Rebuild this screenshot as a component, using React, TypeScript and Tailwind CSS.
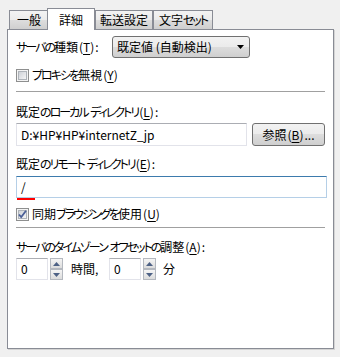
import React from "react";

const font = "[font-family:'Noto_Sans_CJK_JP','Noto_Sans',sans-serif] [font-feature-settings:'palt']";
const btnBg =
  "bg-[linear-gradient(#f2f2f2_0%,#ebebeb_50%,#dddddd_50%,#cfcfcf_100%)] border border-[#707070] rounded-[3px]";

// kana in the original UI font are narrow, tighten them
function J({ t }: { t: string }) {
  const parts = t.split(/([\u3040-\u30ff]+)/);
  return (
    <>
      {parts.map((p, i) =>
        /[\u3040-\u30ff]/.test(p) ? (
          <span key={i} className="tracking-[-2px]">
            {p}
          </span>
        ) : (
          <React.Fragment key={i}>{p}</React.Fragment>
        )
      )}
    </>
  );
}

function Key({ k }: { k: string }) {
  return (
    <>
      <span className="ml-[1px]">(</span>
      <span className="underline underline-offset-2">{k}</span>
      <span className="mr-[1px]">)</span>
    </>
  );
}

function CheckBox({ checked }: { checked?: boolean }) {
  return (
    <svg width="13" height="13" viewBox="0 0 13 13" className="shrink-0">
      <defs>
        <linearGradient id={checked ? "cbg1" : "cbg0"} x1="0" y1="0" x2="1" y2="1">
          <stop offset="0" stopColor="#cbcfd5" />
          <stop offset="1" stopColor="#f7f7f7" />
        </linearGradient>
      </defs>
      <rect x="0.5" y="0.5" width="12" height="12" fill="#f4f4f4" stroke="#8e8f8f" />
      <rect x="2.5" y="2.5" width="8" height="8" fill={`url(#${checked ? "cbg1" : "cbg0"})`} stroke="#aeb3b9" />
      {checked && (
        <path d="M3 6.5 L5.2 9 L10 2.8" fill="none" stroke="#4a5f97" strokeWidth="1.8" />
      )}
    </svg>
  );
}

function Tab({ label, selected, w, ml }: { label: string; selected?: boolean; w: string; ml?: string }) {
  if (selected) {
    return (
      <div
        className={`${w} ${ml ?? ""} relative z-10 -mb-px h-[22px] border border-b-0 border-[#898c95] bg-white flex items-center justify-center text-[12px]`}
      >
        <span>
          <J t={label} />
        </span>
      </div>
    );
  }
  return (
    <div
      className={`${w} ${ml ?? ""} h-[19px] border border-b-0 border-[#898c95] bg-[linear-gradient(#f3f3f3_0%,#ebebeb_50%,#dddddd_51%,#cfcfcf_100%)] flex items-center justify-center text-[12px]`}
    >
      <span>
        <J t={label} />
      </span>
    </div>
  );
}

function Spin() {
  const arrow = (up: boolean) => (
    <div className="h-[11px] border border-[#b4b8bf] bg-[linear-gradient(#f5f5f5,#dcdcdc)] flex items-center justify-center">
      <svg width="7" height="4" viewBox="0 0 7 4">
        <path d={up ? "M0 4 L3.5 0 L7 4 Z" : "M0 0 L3.5 4 L7 0 Z"} fill="#4d6185" />
      </svg>
    </div>
  );
  return (
    <div className="ml-[2px] w-[13px] flex flex-col">
      {arrow(true)}
      {arrow(false)}
    </div>
  );
}

function NumBox() {
  return (
    <div className="w-[32px] h-[22px] border border-[#e2e3ea] border-t-[#abadb3] bg-white flex items-center pl-[4px] text-[12px]">
      0
    </div>
  );
}

function Label({ t, k, mt }: { t: string; k: string; mt: string }) {
  return (
    <div className={`${mt} h-[16px] flex items-center text-[12px]`}>
      <span className="whitespace-pre">
        <J t={t} />
        <Key k={k} />:
      </span>
    </div>
  );
}

export default function App() {
  return (
    <div className={`w-[340px] h-[357px] bg-[#f0f0f0] pt-[8px] pl-[7px] text-black ${font}`}>
      <div className="flex items-end h-[21px] pl-[2px]">
        <Tab label="一般" w="w-[40px]" />
        <Tab label="詳細" selected w="w-[48px]" ml="-ml-[2px]" />
        <Tab label="転送設定" w="w-[58px]" />
        <Tab label="文字セット" w="w-[60px]" />
      </div>

      <div className="w-[327px] h-[320px] border border-[#898c95] bg-white pl-[8px] pt-[6px] shadow-[1px_1px_0_#d4d4d4]">
        <div className="flex items-center h-[22px] text-[12px]">
          <span className="w-[96px]">
            <J t="サーバの種類" />
            <Key k="T" />:
          </span>
          <div className={`${btnBg} w-[138px] h-[22px] flex items-center pl-[4px] pr-[5px]`}>
            <span className="flex-1">既定値 (自動検出)</span>
            <svg width="7" height="4" viewBox="0 0 7 4">
              <path d="M0 0 L7 0 L3.5 4 Z" fill="#000" />
            </svg>
          </div>
        </div>

        <div className="mt-[10px] flex items-center gap-[3px] h-[14px] text-[12px]">
          <CheckBox />
          <span>
            <J t="プロキシを無視" />
            <Key k="Y" />
          </span>
        </div>

        <div className="mt-[9px] w-[309px] border-t border-[#a0a0a0]" />

        <Label mt="mt-[12px]" t="既定のローカル ディレクトリ" k="L" />

        <div className="mt-[3px] flex items-center">
          <div className="w-[231px] h-[23px] border border-[#e2e3ea] border-t-[#abadb3] flex items-center pl-[4px] text-[12px]">
            D:¥HP¥HP¥internetZ_jp
          </div>
          <div className={`${btnBg} ml-[5px] w-[73px] h-[23px] flex items-center justify-center text-[12px]`}>
            <span>
              参照<Key k="B" />...
            </span>
          </div>
        </div>

        <Label mt="mt-[10px]" t="既定のリモート ディレクトリ" k="E" />

        <div className="mt-[4px] relative w-[311px] h-[22px] border border-[#b5cfe7] border-t-[#3d7bad] flex items-center pl-[4px] text-[12px]">
          /
          <div className="absolute left-0 bottom-[-3px] w-[18px] h-[2px] bg-[#ff0000]" />
        </div>

        <div className="mt-[9px] flex items-center gap-[3px] h-[14px] text-[12px]">
          <CheckBox checked />
          <span>
            <J t="同期ブラウジングを使用" />
            <Key k="U" />
          </span>
        </div>

        <div className="mt-[6px] w-[309px] border-t border-[#a0a0a0]" />

        <Label mt="mt-[11px]" t="サーバのタイムゾーン オフセットの調整" k="A" />

        <div className="mt-[3px] flex items-stretch h-[22px] text-[12px]">
          <NumBox />
          <Spin />
          <span className="ml-[8px] w-[38px] flex items-center">時間,</span>
          <NumBox />
          <Spin />
          <span className="ml-[7px] flex items-center">分</span>
        </div>
      </div>
    </div>
  );
}
